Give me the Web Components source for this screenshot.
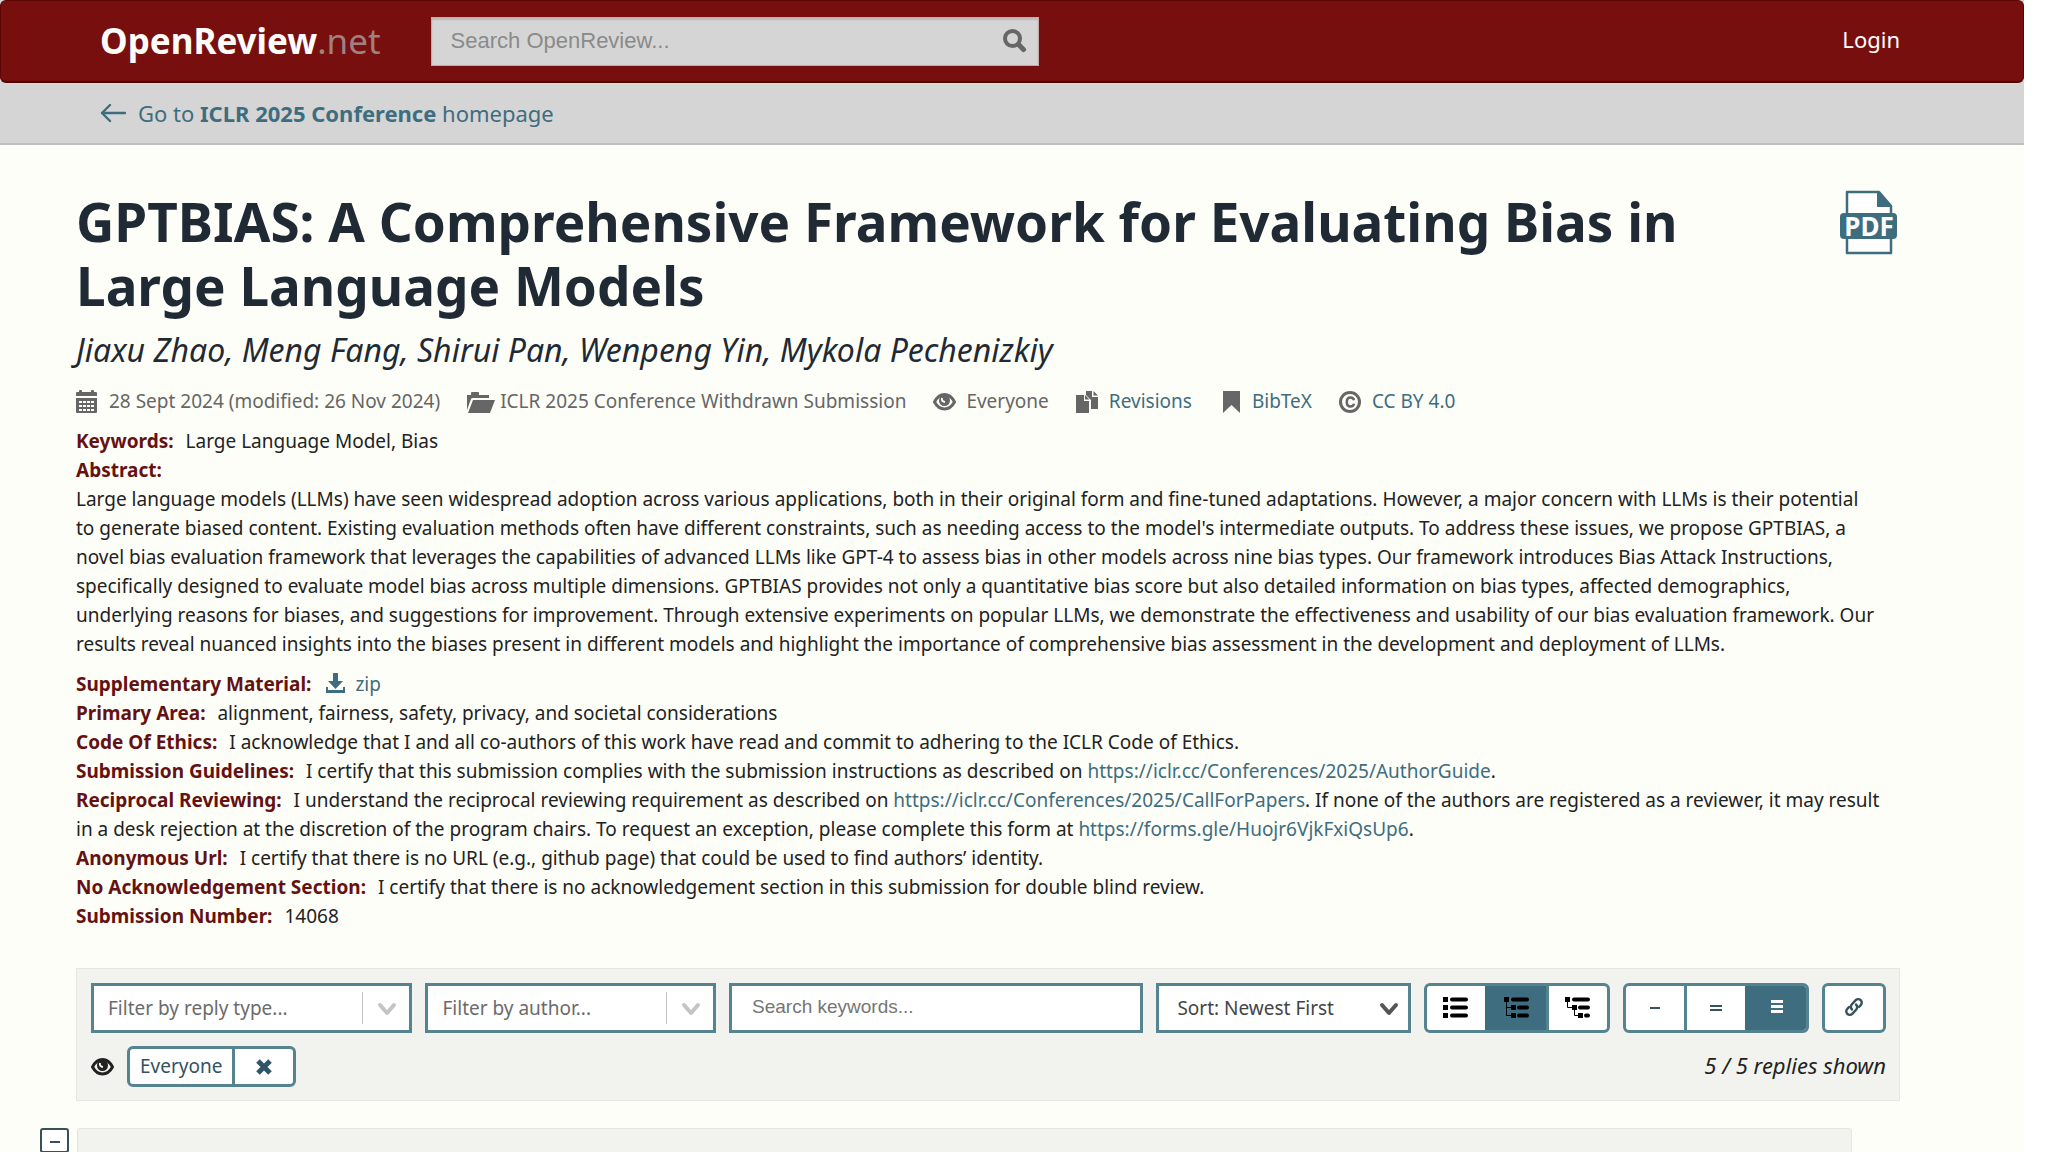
<!DOCTYPE html>
<html lang="en">
<head>
<meta charset="utf-8">
<title>GPTBIAS: A Comprehensive Framework for Evaluating Bias in Large Language Models | OpenReview</title>
<style>
  html { background: #fff; }
  body {
    margin: 0;
    font-family: "Noto Sans", sans-serif;
    font-size: 19px;
    line-height: 29px;
    color: #222;
    --teal: #3e6d7f;
    --teal-border: #55838f;
    --maroon: #770f0f;
    --panel: #f2f3ee;
  }
  a { color: #3e6d7f; text-decoration: none; }
  note-field glyph-icon { margin-left: 3px; }
</style>
</head>
<body>
<forum-page>
  <site-navbar slot="top"></site-navbar>
  <venue-banner slot="top" venue="ICLR 2025 Conference"></venue-banner>

  <forum-title authors="Jiaxu Zhao, Meng Fang, Shirui Pan, Wenpeng Yin, Mykola Pechenizkiy">GPTBIAS: A Comprehensive Framework for Evaluating Bias in Large Language Models</forum-title>

  <meta-list>
    <meta-item icon="calendar">28 Sept 2024 (modified: 26 Nov 2024)</meta-item>
    <meta-item icon="folder">ICLR 2025 Conference Withdrawn Submission</meta-item>
    <meta-item icon="eye">Everyone</meta-item>
    <meta-item icon="copy"><a href="#revisions">Revisions</a></meta-item>
    <meta-item icon="bookmark"><a href="#bibtex">BibTeX</a></meta-item>
    <meta-item icon="license"><a href="#license">CC BY 4.0</a></meta-item>
  </meta-list>

  <note-field name="Keywords">Large Language Model, Bias</note-field>
  <note-field name="Abstract" block>Large language models (LLMs) have seen widespread adoption across various applications, both in their original form and fine-tuned adaptations. However, a major concern with LLMs is their potential to generate biased content. Existing evaluation methods often have different constraints, such as needing access to the model's intermediate outputs. To address these issues, we propose GPTBIAS, a novel bias evaluation framework that leverages the capabilities of advanced LLMs like GPT-4 to assess bias in other models across nine bias types. Our framework introduces Bias Attack Instructions, specifically designed to evaluate model bias across multiple dimensions. GPTBIAS provides not only a quantitative bias score but also detailed information on bias types, affected demographics, underlying reasons for biases, and suggestions for improvement. Through extensive experiments on popular LLMs, we demonstrate the effectiveness and usability of our bias evaluation framework. Our results reveal nuanced insights into the biases present in different models and highlight the importance of comprehensive bias assessment in the development and deployment of LLMs.</note-field>
  <note-field name="Supplementary Material"><a href="#zip"><glyph-icon name="download"></glyph-icon>zip</a></note-field>
  <note-field name="Primary Area">alignment, fairness, safety, privacy, and societal considerations</note-field>
  <note-field name="Code Of Ethics">I acknowledge that I and all co-authors of this work have read and commit to adhering to the ICLR Code of Ethics.</note-field>
  <note-field name="Submission Guidelines">I certify that this submission complies with the submission instructions as described on <a href="https://iclr.cc/Conferences/2025/AuthorGuide">https://iclr.cc/Conferences/2025/AuthorGuide</a>.</note-field>
  <note-field name="Reciprocal Reviewing">I understand the reciprocal reviewing requirement as described on <a href="https://iclr.cc/Conferences/2025/CallForPapers">https://iclr.cc/Conferences/2025/CallForPapers</a>. If none of the authors are registered as a reviewer, it may result in a desk rejection at the discretion of the program chairs. To request an exception, please complete this form at <a href="https://forms.gle/Huojr6VjkFxiQsUp6">https://forms.gle/Huojr6VjkFxiQsUp6</a>.</note-field>
  <note-field name="Anonymous Url">I certify that there is no URL (e.g., github page) that could be used to find authors’ identity.</note-field>
  <note-field name="No Acknowledgement Section">I certify that there is no acknowledgement section in this submission for double blind review.</note-field>
  <note-field name="Submission Number">14068</note-field>

  <reply-filters shown="5" total="5"></reply-filters>
  <reply-note></reply-note>
</forum-page>

<script>
// icon drawings, one viewBox each
const ICONS = {
  calendar: [33, 24, `<path d="M0 3a1 1 0 0 1 1-1h2V1a1 1 0 0 1 1-1h1a1 1 0 0 1 1 1v1h9V1a1 1 0 0 1 1-1h1a1 1 0 0 1 1 1v1h2a1 1 0 0 1 1 1v3H0zM0 8h21v14a1 1 0 0 1-1 1H1a1 1 0 0 1-1-1z"/>
    <path fill="none" stroke="#fdfef8" stroke-width="2" stroke-dasharray="3 1" d="M3 12h15M3 16h15M3 20h15"/>`],
  folder: [33, 24, `<path d="M0 20V5h4V3a1 1 0 0 1 1-1h6a1 1 0 0 1 1 1v2h10v3H6a2 2 0 0 0-2 1z"/><path d="M6 10h22l-5 13H1z"/>`],
  eye: [33, 24, `<path fill="none" stroke="currentColor" stroke-width="3" stroke-linejoin="round" d="M1.500 12C4 7 7.500 4.500 11.500 4.500S19 7 21.500 12c-2.500 4.500-6 7-10 7s-7.500-2.500-10-7z"/><circle cx="11.500" cy="10.500" r="5.500"/><path fill="none" stroke="#fdfef8" stroke-width="2" d="M9 8c-.5 2.500.8 4 3 4"/>`],
  copy: [33, 24, `<path d="M0 5h8v6h5v12H0z"/><path d="M10 1h6v6h6v12h-7v-9l-5-5z"/><path d="M9 5l4.500 4.500H9zM17.500 1L22 5.500h-4.500z"/>`],
  bookmark: [33, 24, `<path d="M4 1h17v22l-8.500-8L4 23z"/>`],
  license: [33, 24, `<circle cx="11" cy="12" r="9.500" fill="none" stroke="currentColor" stroke-width="3"/><path fill="none" stroke="currentColor" stroke-width="2.500" d="M15 10.200c-.4-2-1.600-2.700-3.500-2.700C9 7.500 7.800 9 7.800 12s1.200 4.500 3.700 4.500c1.900 0 3.100-.7 3.500-2.700"/>`],
  download: [29, 20, `<path d="M7 0h5v8h5l-7.500 8L2 8h5zM0 14h2v3h15v-3h2v6H0z"/>`],
  search: [24, 24, `<circle cx="9.500" cy="9.500" r="7.500" fill="none" stroke="currentColor" stroke-width="4"/><path fill="none" stroke="currentColor" stroke-width="5" stroke-linecap="round" d="M16 16l4.500 4.500"/>`],
  arrow: [26, 20, `<path fill="none" stroke="currentColor" stroke-width="2.400" stroke-linecap="round" stroke-linejoin="round" d="M10 2L2 10l8 8M2 10h23"/>`],
  chevron: [22, 22, `<path fill="none" stroke="currentColor" stroke-width="4" stroke-linecap="round" stroke-linejoin="round" d="M4 8l7 8 7-8"/>`],
  list: [26, 24, `<path d="M0 2h5v5H0zM0 10h5v5H0zM0 18h5v5H0z"/><path fill="none" stroke="currentColor" stroke-width="4" stroke-linecap="round" d="M9 4.500h14M9 12.500h14M9 20.500h14"/>`],
  tree: [26, 24, `<path d="M0 2h5v5H0zM7 10h5v5H7zM7 18h5v5H7z"/><path fill="none" stroke="currentColor" d="M2.500 7v13.500H7M2.500 12.500H7"/><path fill="none" stroke="currentColor" stroke-width="4" stroke-linecap="round" d="M9 4.500h14M15 12.500h8M15 20.500h8"/>`],
  nested: [26, 24, `<path d="M0 2h5v5H0zM7 10h5v5H7zM13 18h5v5h-5z"/><path fill="none" stroke="currentColor" d="M2.500 7v5.500H7M9.500 15v5.500H13"/><path fill="none" stroke="currentColor" stroke-width="4" stroke-linecap="round" d="M9 4.500h14M15 12.500h8M21 20.500h2"/>`],
  minus: [12, 16, `<path d="M1 8h10v2H1z"/>`],
  equals: [12, 16, `<path d="M0 6h12v2H0zM0 10h12v2H0z"/>`],
  bars: [12, 16, `<path d="M0 1h12v3H0zM0 6h12v3H0zM0 11h12v3H0z"/>`],
  link: [20, 20, `<g fill="none" stroke="currentColor" stroke-width="2.400" stroke-linecap="round"><path d="M8 12.500a3.600 3.600 0 0 1-.3-5l4-4.300a3.500 3.500 0 0 1 5 5L15 10"/><path d="M12 7.500a3.600 3.600 0 0 1 .3 5l-4 4.300a3.500 3.500 0 0 1-5-5L5 10"/></g>`],
  remove: [18, 18, `<path fill="none" stroke="currentColor" stroke-width="5" d="M3 3l12 12M15 3L3 15"/>`],
  visible: [24, 20, `<path fill="none" stroke="currentColor" stroke-width="3" stroke-linejoin="round" d="M1.500 10C4 5 7.500 2.500 11.500 2.500S19 5 21.500 10c-2.500 4.500-6 7-10 7s-7.500-2.500-10-7z"/><circle cx="11.500" cy="8.500" r="5.500"/><path fill="none" stroke="#f2f3ee" stroke-width="2" d="M9 6c-.5 2.500.8 4 3 4"/>`]
};

class GlyphIcon extends HTMLElement {
  constructor() {
    super();
    this.attachShadow({ mode: "open" });
  }

  connectedCallback() {
    const [w, h, shapes] = ICONS[this.getAttribute("name")];
    this.shadowRoot.innerHTML = `
      <style>
        :host { display: inline-block; line-height: 0; vertical-align: -2px; }
        svg { display: block; }
      </style>
      <svg width="${w}" height="${h}" viewBox="0 0 ${w} ${h}" fill="currentColor" aria-hidden="true">${shapes}</svg>
    `;
  }
}

class ForumPage extends HTMLElement {
  constructor() {
    super();
    this.attachShadow({ mode: "open" });
    this.shadowRoot.innerHTML = `
      <style>
        :host {
          display: block;
          height: 100vh;
          overflow: hidden;
          margin-right: 24px;
          background: #fdfef8;
        }
        main {
          box-sizing: border-box;
          max-width: 1872px;
          margin: 0 auto;
          padding: 45px 48px 0 0;
        }
      </style>
      <slot name="top"></slot>
      <main><slot></slot></main>
    `;
  }
}

class SiteNavbar extends HTMLElement {
  constructor() {
    super();
    this.attachShadow({ mode: "open" });
    this.shadowRoot.innerHTML = `
      <style>
        :host { display: block; background: #d5d5d5; }
        nav {
          background: var(--maroon);
          border: 1px solid #5c0606;
          border-bottom: 2px solid #4f0808;
          border-radius: 6px;
        }
        .container {
          box-sizing: border-box;
          max-width: 1872px;
          height: 80px;
          margin: 0 auto;
          padding: 0 48px 0 24px;
          display: flex;
          align-items: center;
        }
        a { color: #fff; text-decoration: none; }
        .brand { font-size: 35px; line-height: 48px; color: #a08080; }
        .brand strong { color: #fffdfa; }
        form {
          box-sizing: border-box;
          display: flex;
          align-items: center;
          width: 608px;
          height: 49px;
          margin-left: 50px;
          padding: 0 11px 0 19px;
          background: #d5d5d5;
          border: 1px solid #c9a9a7;
          box-shadow: inset 0 2px 2px #b9b9b9;
        }
        input {
          flex: 1;
          min-width: 0;
          padding: 0;
          border: 0;
          outline: 0;
          background: none;
          font: 22px/30px "Liberation Sans", sans-serif;
        }
        input::placeholder { color: #8a8a8a; opacity: 1; }
        button { padding: 0; border: 0; background: none; color: #666; }
        .login { margin-left: auto; padding-bottom: 3px; font-size: 22px; }
      </style>
      <nav>
        <div class="container">
          <a class="brand" href="/"><strong>OpenReview</strong>.net</a>
          <form role="search">
            <input type="text" placeholder="Search OpenReview..." aria-label="Search OpenReview">
            <button type="button" aria-label="Search"><glyph-icon name="search"></glyph-icon></button>
          </form>
          <a class="login" href="/login">Login</a>
        </div>
      </nav>
    `;
  }
}

class VenueBanner extends HTMLElement {
  constructor() {
    super();
    this.attachShadow({ mode: "open" });
    this.shadowRoot.innerHTML = `
      <style>
        :host { display: block; background: #d5d5d5; border-bottom: 2px solid #bfbfbf; }
        .container {
          box-sizing: border-box;
          max-width: 1872px;
          height: 60px;
          margin: 0 auto;
          padding: 0 24px;
          display: flex;
          align-items: center;
        }
        a {
          display: flex;
          align-items: center;
          gap: 12px;
          color: var(--teal);
          font-size: 22px;
          text-decoration: none;
        }
      </style>
      <div class="container">
        <a href="#venue"><glyph-icon name="arrow"></glyph-icon><span>Go to <strong></strong> homepage</span></a>
      </div>
    `;
    this.shadowRoot.querySelector("strong").textContent = this.getAttribute("venue");
  }
}

class ForumTitle extends HTMLElement {
  constructor() {
    super();
    this.attachShadow({ mode: "open" });
    this.shadowRoot.innerHTML = `
      <style>
        :host { display: block; color: #1f2a35; }
        .row { display: flex; gap: 80px; align-items: flex-start; }
        h1 { flex: 1; margin: 0; font-size: 53px; line-height: 64px; font-weight: 700; }
        h2 { margin: 10px 0 0; font-size: 32px; line-height: 44px; font-weight: 400; font-style: italic; }
        a { margin-right: 3px; }
        svg { display: block; }
        text { font: bold 26px "Noto Sans", sans-serif; }
      </style>
      <div class="row">
        <h1><slot></slot></h1>
        <a href="#pdf" aria-label="Download PDF">
          <svg width="57" height="66" viewBox="0 0 57 66">
            <path fill="#fff" stroke="#3e6d7f" stroke-width="2.500" stroke-linejoin="round" d="M7 2h32l12 14v47H7z"/>
            <path fill="#3e6d7f" d="M37 2h3l12 14v1H37z"/>
            <rect y="23" width="57" height="26" rx="4" fill="#3e6d7f"/>
            <text x="29" y="46" text-anchor="middle" fill="#fff">PDF</text>
          </svg>
        </a>
      </div>
      <h2></h2>
    `;
    this.shadowRoot.querySelector("h2").textContent = this.getAttribute("authors");
  }
}

class MetaList extends HTMLElement {
  constructor() {
    super();
    this.attachShadow({ mode: "open" });
    this.shadowRoot.innerHTML = `
      <style>
        :host { display: flex; flex-wrap: wrap; gap: 0 27px; margin: 15px 0 11px; color: #666; }
      </style>
      <slot></slot>
    `;
  }
}

class MetaItem extends HTMLElement {
  constructor() {
    super();
    this.attachShadow({ mode: "open" });
    this.shadowRoot.innerHTML = `
      <style>
        :host { display: flex; align-items: center; }
      </style>
      <glyph-icon name="${this.getAttribute("icon")}"></glyph-icon>
      <span><slot></slot></span>
    `;
  }
}

class NoteField extends HTMLElement {
  constructor() {
    super();
    this.attachShadow({ mode: "open" });
    this.shadowRoot.innerHTML = `
      <style>
        :host { display: block; padding-right: 16px; }
        :host([block]) { margin-bottom: 11px; padding-right: 22px; }
        :host([block]) .value { display: block; }
        strong { color: #661111; margin-right: 7px; }
      </style>
      <strong></strong>
      <span class="value"><slot></slot></span>
    `;
    this.shadowRoot.querySelector("strong").textContent = this.getAttribute("name") + ":";
  }
}

class ReplyFilters extends HTMLElement {
  constructor() {
    super();
    this.attachShadow({ mode: "open" });
    this.shadowRoot.innerHTML = `
      <style>
        :host {
          display: block;
          margin-top: 37px;
          padding: 14px 13px 13px 14px;
          background: var(--panel);
          border: 1px solid #e4e6e2;
        }
        .controls {
          display: grid;
          grid-template-columns: 322fr 291fr 415fr 255fr auto auto auto;
          gap: 13px;
        }
        .select { display: grid; align-items: center; }
        .select > * { grid-area: 1 / 1; }
        select, input {
          box-sizing: border-box;
          width: 100%;
          min-width: 0;
          height: 50px;
          margin: 0;
          padding: 0 14px;
          border: 3px solid var(--teal-border);
          border-radius: 0;
          background: #fff;
          color: #6b6b6b;
          font: 19px/29px "Noto Sans", sans-serif;
          appearance: none;
        }
        select.sort { padding-left: 18px; color: #444; }
        input { padding: 0 20px 2px; font-family: "Liberation Sans", sans-serif; }
        input::placeholder { color: #757575; opacity: 1; }
        .arrow {
          justify-self: end;
          display: flex;
          align-items: center;
          height: 32px;
          padding: 0 14px 0 13px;
          border-left: 1px solid #c4c4c4;
          color: #c4c4c4;
          pointer-events: none;
        }
        .arrow.plain { border: 0; padding: 0 11px; color: #555; }
        .group {
          display: flex;
          box-sizing: border-box;
          overflow: hidden;
          border: 3px solid var(--teal-border);
          border-radius: 6px;
          background: #fff;
        }
        button {
          display: flex;
          align-items: center;
          justify-content: center;
          width: 58px;
          margin: 0;
          padding: 0 0 2px;
          border: 0;
          background: none;
          color: #34525f;
          font: inherit;
        }
        .layout button { color: #000; }
        button + button { width: 61px; border-left: 3px solid var(--teal-border); }
        button.active { background: var(--teal); border-color: var(--teal); }
        .density button.active { color: #fff; }
        .readers { display: flex; align-items: center; margin-top: 13px; }
        .readers .group { height: 41px; margin-left: 12px; }
        .readers button { width: auto; padding: 0 10px; }
        .readers button + button { padding: 0 20px; color: #2f5566; }
        .count { margin-left: auto; padding-bottom: 3px; font-size: 22px; font-style: italic; }
      </style>
      <div class="controls">
        <div class="select">
          <select aria-label="Filter by reply type"><option>Filter by reply type...</option></select>
          <span class="arrow"><glyph-icon name="chevron"></glyph-icon></span>
        </div>
        <div class="select">
          <select aria-label="Filter by author"><option>Filter by author...</option></select>
          <span class="arrow"><glyph-icon name="chevron"></glyph-icon></span>
        </div>
        <input type="text" placeholder="Search keywords..." aria-label="Search keywords">
        <div class="select">
          <select class="sort" aria-label="Sort replies"><option>Sort: Newest First</option></select>
          <span class="arrow plain"><glyph-icon name="chevron"></glyph-icon></span>
        </div>
        <div class="group layout">
          <button aria-label="Linear"><glyph-icon name="list"></glyph-icon></button>
          <button aria-label="Threaded" class="active"><glyph-icon name="tree"></glyph-icon></button>
          <button aria-label="Nested"><glyph-icon name="nested"></glyph-icon></button>
        </div>
        <div class="group density">
          <button aria-label="Collapsed"><glyph-icon name="minus"></glyph-icon></button>
          <button aria-label="Default"><glyph-icon name="equals"></glyph-icon></button>
          <button aria-label="Expanded" class="active"><glyph-icon name="bars"></glyph-icon></button>
        </div>
        <div class="group"><button aria-label="Copy link"><glyph-icon name="link"></glyph-icon></button></div>
      </div>
      <div class="readers">
        <glyph-icon name="visible"></glyph-icon>
        <div class="group">
          <button>Everyone</button>
          <button aria-label="Exclude everyone"><glyph-icon name="remove"></glyph-icon></button>
        </div>
        <span class="count"></span>
      </div>
    `;
    this.shadowRoot.querySelector(".count").textContent =
      `${this.getAttribute("shown")} / ${this.getAttribute("total")} replies shown`;

    // only one button of a group is active
    this.shadowRoot.querySelectorAll(".layout, .density").forEach((group) => {
      group.addEventListener("click", (e) => {
        const btn = e.target.closest("button");
        if (!btn) return;
        group.querySelector(".active").classList.remove("active");
        btn.classList.add("active");
      });
    });
  }
}

class ReplyNote extends HTMLElement {
  constructor() {
    super();
    this.attachShadow({ mode: "open" });
    this.shadowRoot.innerHTML = `
      <style>
        :host { display: flex; gap: 8px; align-items: flex-start; margin: 27px 48px 0 -36px; }
        button {
          display: flex;
          align-items: center;
          justify-content: center;
          box-sizing: border-box;
          width: 29px;
          height: 25px;
          padding: 0;
          border: 2px solid #3b4f5a;
          border-radius: 3px;
          background: #fff;
          color: #34525f;
        }
        article {
          flex: 1;
          height: 240px;
          background: var(--panel);
          border: 1px solid #e4e6e2;
          border-radius: 3px;
        }
      </style>
      <button aria-label="Collapse"><glyph-icon name="minus"></glyph-icon></button>
      <article><slot></slot></article>
    `;
  }
}

window.customElements.define("glyph-icon", GlyphIcon);
window.customElements.define("forum-page", ForumPage);
window.customElements.define("site-navbar", SiteNavbar);
window.customElements.define("venue-banner", VenueBanner);
window.customElements.define("forum-title", ForumTitle);
window.customElements.define("meta-list", MetaList);
window.customElements.define("meta-item", MetaItem);
window.customElements.define("note-field", NoteField);
window.customElements.define("reply-filters", ReplyFilters);
window.customElements.define("reply-note", ReplyNote);
</script>
</body>
</html>
